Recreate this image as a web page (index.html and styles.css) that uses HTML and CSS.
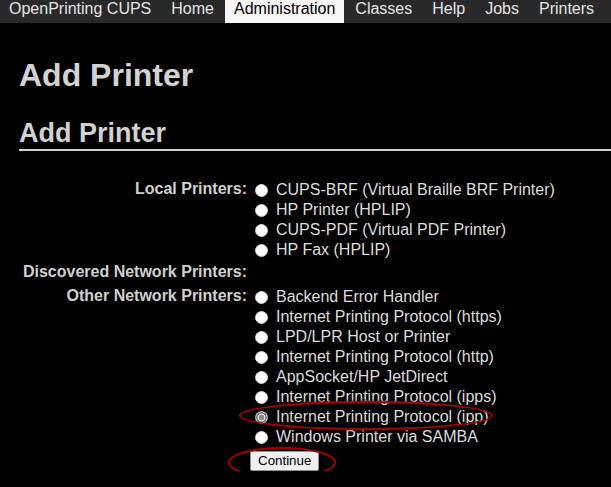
FILE: index.html
```html
<!DOCTYPE html>
<html lang="en">
<head>
<meta charset="utf-8">
<title>Add Printer - CUPS</title>
<link rel="stylesheet" href="styles.css">
</head>
<body>
<nav class="topbar">
  <a class="tab" href="#">OpenPrinting CUPS</a>
  <a class="tab" href="#">Home</a>
  <a class="tab active" href="#">Administration</a>
  <a class="tab" href="#">Classes</a>
  <a class="tab" href="#">Help</a>
  <a class="tab" href="#">Jobs</a>
  <a class="tab" href="#">Printers</a>
</nav>
<main class="page">
  <h1 class="title">Add Printer</h1>
  <h2 class="subtitle">Add Printer</h2>
  <form class="form">
    <div class="label">Local Printers:</div>
    <div class="options">
      <label class="opt"><input type="radio" name="device" class="radio">CUPS-BRF (Virtual Braille BRF Printer)</label>
      <label class="opt"><input type="radio" name="device" class="radio">HP Printer (HPLIP)</label>
      <label class="opt"><input type="radio" name="device" class="radio">CUPS-PDF (Virtual PDF Printer)</label>
      <label class="opt"><input type="radio" name="device" class="radio">HP Fax (HPLIP)</label>
    </div>
    <div class="label label-discovered">Discovered Network Printers:</div>
    <div class="options"></div>
    <div class="label">Other Network Printers:</div>
    <div class="options">
      <label class="opt"><input type="radio" name="device" class="radio">Backend Error Handler</label>
      <label class="opt"><input type="radio" name="device" class="radio">Internet Printing Protocol (https)</label>
      <label class="opt"><input type="radio" name="device" class="radio">LPD/LPR Host or Printer</label>
      <label class="opt"><input type="radio" name="device" class="radio">Internet Printing Protocol (http)</label>
      <label class="opt"><input type="radio" name="device" class="radio">AppSocket/HP JetDirect</label>
      <label class="opt"><input type="radio" name="device" class="radio">Internet Printing Protocol (ipps)</label>
      <label class="opt"><input type="radio" name="device" class="radio" checked>Internet Printing Protocol (ipp)</label>
      <label class="opt"><input type="radio" name="device" class="radio">Windows Printer via SAMBA</label>
    </div>
    <div class="label"></div>
    <div class="options">
      <button type="button" class="btn">Continue</button>
    </div>
  </form>
  <div class="mark mark-ipp"></div>
  <div class="mark mark-continue"></div>
</main>
</body>
</html>
```

FILE: styles.css
```css
html, body {
  margin: 0;
  padding: 0;
  background: #000;
}

body {
  font-family: "Liberation Sans", Arial, sans-serif;
  color: #dcdcdc;
  overflow: hidden;
}

.topbar {
  display: flex;
  gap: 2px;
  height: 23px;
  background: #292929;
}

.tab {
  display: block;
  padding: 0 9px 5px;
  font-size: 16px;
  line-height: 18px;
  color: #e4e4e4;
  text-decoration: none;
  white-space: nowrap;
}

.tab.active {
  background: #f6f6f6;
  color: #000;
}

.page {
  position: relative;
  padding: 34px 0 0 19px;
}

.title {
  margin: 0;
  font-size: 32px;
  line-height: 37px;
  font-weight: bold;
  color: #d2d2d2;
}

.subtitle {
  margin: 24px 0 0;
  font-size: 27px;
  line-height: 31px;
  font-weight: bold;
  color: #d2d2d2;
  border-bottom: 2px solid #d0d0d0;
}

.form {
  display: grid;
  grid-template-columns: 228px 1fr;
  column-gap: 3px;
  row-gap: 2px;
  margin-top: 29px;
}

.label {
  text-align: right;
  font-weight: bold;
  font-size: 16px;
  line-height: 18px;
  color: #d0d0d0;
  white-space: nowrap;
}

.label-discovered {
  padding: 1px 0 4px;
}

.options {
  display: flex;
  flex-direction: column;
}

.opt {
  display: flex;
  align-items: center;
  height: 20px;
  font-size: 16px;
  line-height: 20px;
  color: #dcdcdc;
  white-space: nowrap;
}

.radio {
  appearance: none;
  -webkit-appearance: none;
  box-sizing: border-box;
  width: 13px;
  height: 13px;
  margin: 0 8px 0 5px;
  border-radius: 50%;
  border: 1px solid #d0d0d0;
  background: #fff;
  flex: none;
}

.radio:checked {
  border: 1px solid #bdbdbd;
  background: radial-gradient(circle, #8c8c8c 0 2.6px, #e2e2e2 3.2px 3.8px, #6e6e6e 4.3px 5px, #d8d8d8 5.5px);
}

.btn {
  margin-top: 2px;
  box-sizing: border-box;
  height: 20px;
  padding: 0 7px;
  font-family: "Liberation Sans", Arial, sans-serif;
  font-size: 13.33px;
  line-height: 16px;
  color: #000;
  background: #efefef;
  border: 1px solid #8f8f8f;
  border-radius: 2px;
  align-self: flex-start;
}

.mark {
  position: absolute;
  box-sizing: border-box;
  border: 2px solid #a80000;
  border-radius: 50%;
  box-shadow: 0 0 3px rgba(80, 0, 0, 0.8);
  pointer-events: none;
}

.mark-ipp {
  left: 239px;
  top: 378px;
  width: 254px;
  height: 29px;
}

.mark-continue {
  left: 228px;
  top: 424px;
  width: 108px;
  height: 31px;
}
```
